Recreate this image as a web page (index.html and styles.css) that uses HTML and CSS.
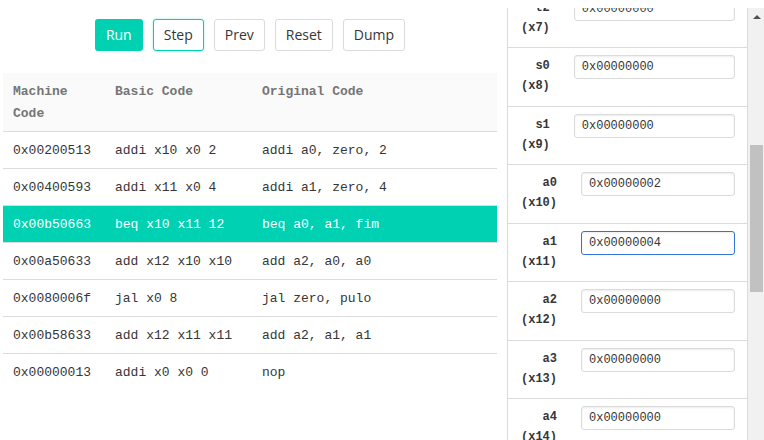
FILE: index.html
```html
<!DOCTYPE html>
<html>
<head>
<meta charset="utf-8">
<link rel="stylesheet" href="styles.css">
</head>
<body>
<div class="app">
  <div class="left">
    <div class="toolbar">
      <button class="btn btn-primary">Run</button>
      <button class="btn btn-focus">Step</button>
      <button class="btn">Prev</button>
      <button class="btn">Reset</button>
      <button class="btn">Dump</button>
    </div>
    <table class="code">
      <colgroup><col class="c1"><col class="c2"><col class="c3"></colgroup>
      <thead>
        <tr><th>Machine Code</th><th>Basic Code</th><th>Original Code</th></tr>
      </thead>
      <tbody>
        <tr><td>0x00200513</td><td>addi x10 x0 2</td><td>addi a0, zero, 2</td></tr>
        <tr><td>0x00400593</td><td>addi x11 x0 4</td><td>addi a1, zero, 4</td></tr>
        <tr class="current"><td>0x00b50663</td><td>beq x10 x11 12</td><td>beq a0, a1, fim</td></tr>
        <tr><td>0x00a50633</td><td>add x12 x10 x10</td><td>add a2, a0, a0</td></tr>
        <tr><td>0x0080006f</td><td>jal x0 8</td><td>jal zero, pulo</td></tr>
        <tr><td>0x00b58633</td><td>add x12 x11 x11</td><td>add a2, a1, a1</td></tr>
        <tr><td>0x00000013</td><td>addi x0 x0 0</td><td>nop</td></tr>
      </tbody>
    </table>
  </div>
  <div class="regpanel">
    <div class="regs" id="regs">
      <div class="reglist">
        <div class="reg"><div class="rlabel">zero (x0)</div><input class="rin" value="0x00000000"></div>
        <div class="reg"><div class="rlabel">ra (x1)</div><input class="rin" value="0x00000000"></div>
        <div class="reg"><div class="rlabel">sp (x2)</div><input class="rin" value="0x00000000"></div>
        <div class="reg"><div class="rlabel">gp (x3)</div><input class="rin" value="0x00000000"></div>
        <div class="reg"><div class="rlabel">tp (x4)</div><input class="rin" value="0x00000000"></div>
        <div class="reg"><div class="rlabel">t0 (x5)</div><input class="rin" value="0x00000000"></div>
        <div class="reg"><div class="rlabel">t1 (x6)</div><input class="rin" value="0x00000000"></div>
        <div class="reg"><div class="rlabel">t2 (x7)</div><input class="rin" value="0x00000000"></div>
        <div class="reg"><div class="rlabel">s0 (x8)</div><input class="rin" value="0x00000000"></div>
        <div class="reg"><div class="rlabel">s1 (x9)</div><input class="rin" value="0x00000000"></div>
        <div class="reg"><div class="rlabel">a0 (x10)</div><input class="rin" value="0x00000002"></div>
        <div class="reg"><div class="rlabel">a1 (x11)</div><input class="rin rin-focus" value="0x00000004"></div>
        <div class="reg"><div class="rlabel">a2 (x12)</div><input class="rin" value="0x00000000"></div>
        <div class="reg"><div class="rlabel">a3 (x13)</div><input class="rin" value="0x00000000"></div>
        <div class="reg"><div class="rlabel">a4 (x14)</div><input class="rin" value="0x00000000"></div>
        <div class="reg"><div class="rlabel">a5 (x15)</div><input class="rin" value="0x00000000"></div>
        <div class="reg"><div class="rlabel">a6 (x16)</div><input class="rin" value="0x00000000"></div>
        <div class="reg"><div class="rlabel">a7 (x17)</div><input class="rin" value="0x00000000"></div>
        <div class="reg"><div class="rlabel">s2 (x18)</div><input class="rin" value="0x00000000"></div>
        <div class="reg"><div class="rlabel">s3 (x19)</div><input class="rin" value="0x00000000"></div>
        <div class="reg"><div class="rlabel">s4 (x20)</div><input class="rin" value="0x00000000"></div>
        <div class="reg"><div class="rlabel">s5 (x21)</div><input class="rin" value="0x00000000"></div>
        <div class="reg"><div class="rlabel">s6 (x22)</div><input class="rin" value="0x00000000"></div>
        <div class="reg"><div class="rlabel">s7 (x23)</div><input class="rin" value="0x00000000"></div>
        <div class="reg"><div class="rlabel">s8 (x24)</div><input class="rin" value="0x00000000"></div>
        <div class="reg"><div class="rlabel">s9 (x25)</div><input class="rin" value="0x00000000"></div>
        <div class="reg"><div class="rlabel">s10 (x26)</div><input class="rin" value="0x00000000"></div>
        <div class="reg"><div class="rlabel">s11 (x27)</div><input class="rin" value="0x00000000"></div>
        <div class="reg"><div class="rlabel">t3 (x28)</div><input class="rin" value="0x00000000"></div>
        <div class="reg"><div class="rlabel">t4 (x29)</div><input class="rin" value="0x00000000"></div>
        <div class="reg"><div class="rlabel">t5 (x30)</div><input class="rin" value="0x00000000"></div>
        <div class="reg"><div class="rlabel">t6 (x31)</div><input class="rin" value="0x00000000"></div>
      </div>
    </div>
    <div class="sbar" aria-hidden="true">
      <div class="sbar-up"><span class="sbar-arrow"></span></div>
      <div class="sbar-before"></div>
      <div class="sbar-thumb"></div>
      <div class="sbar-after"></div>
    </div>
  </div>
</div>
<script src="script.js"></script>
</body>
</html>
```
FILE: styles.css
```css
html, body {
  margin: 0;
  padding: 0;
  overflow: hidden;
  background: #fff;
}
body {
  font-family: "Liberation Mono", monospace;
  color: #363636;
}
.app {
  display: flex;
  align-items: flex-start;
}
.left {
  width: 494px;
  margin-left: 3px;
  flex: none;
}
.toolbar {
  display: flex;
  justify-content: center;
  gap: 10px;
  padding: 19px 0 22px;
}
.btn {
  font-family: "Open Sans", "Noto Sans", sans-serif;
  font-size: 14px;
  line-height: 20px;
  height: 32px;
  padding: 5px 10px;
  border: 1px solid #dbdbdb;
  border-radius: 3px;
  background: #fff;
  color: #363636;
  margin: 0;
}
.btn-primary {
  background: #00d1b2;
  border-color: transparent;
  color: #fff;
}
.btn-focus {
  border-color: #00d1b2;
  box-shadow: 0 0 3px rgba(0, 209, 178, 0.35);
}
.code {
  width: 494px;
  border-collapse: collapse;
  table-layout: fixed;
  font-size: 13px;
  line-height: 22px;
}
.c1 { width: 102px; }
.c2 { width: 147px; }
.c3 { width: 245px; }
.code th, .code td {
  text-align: left;
  vertical-align: top;
  padding: 8px 10px 6px;
  border-bottom: 1px solid #dbdbdb;
}
.code th {
  background: #fafafa;
  color: #757575;
  font-weight: bold;
}
.code tbody tr:last-child td {
  border-bottom: 0;
}
.code tr.current td {
  background: #00d1b2;
  color: #fff;
}
.regpanel {
  display: flex;
  margin-left: 10px;
  margin-top: 8px;
  width: 257px;
  height: 432px;
  flex: none;
}
.regs {
  flex: 1;
  min-width: 0;
  overflow: hidden;
}
.sbar {
  width: 16px;
  flex: none;
  background: #f1f1f1;
  display: flex;
  flex-direction: column;
}
.sbar-up {
  height: 17px;
  display: flex;
  align-items: center;
  justify-content: center;
  padding-left: 1px;
}
.sbar-arrow {
  width: 0;
  height: 0;
  border-left: 4px solid transparent;
  border-right: 4px solid transparent;
  border-bottom: 4px solid #505050;
}
.sbar-before {
  height: 120px;
}
.sbar-thumb {
  height: 147px;
  margin: 0 1px 0 2px;
  background: #c1c1c1;
}
.sbar-after {
  flex: 1;
}
.reglist {
  border-left: 1px solid #dbdbdb;
  border-right: 1px solid #dbdbdb;
  border-top: 1px solid #dbdbdb;
}
.reg {
  display: flex;
  align-items: flex-start;
  padding: 8px 12px 9.5px 13px;
  border-bottom: 1px solid #dbdbdb;
}
.rlabel {
  width: min-content;
  text-align: right;
  font-size: 12px;
  line-height: 20px;
  font-weight: bold;
  color: #363636;
  flex: none;
}
.rin {
  flex: 1;
  min-width: 0;
  margin: -1px 0 0 24px;
  height: 24px;
  box-sizing: border-box;
  padding: 0 7px;
  border: 1px solid #dbdbdb;
  border-radius: 3px;
  box-shadow: inset 0 1px 2px rgba(10, 10, 10, 0.08);
  font-family: "Liberation Mono", monospace;
  font-size: 12px;
  line-height: 22px;
  color: #363636;
  background: #fff;
  outline: none;
}
.rin-focus {
  border-color: #3273dc;
}
```
FILE: script.js
```js
document.getElementById('regs').scrollTop = 429;
```
